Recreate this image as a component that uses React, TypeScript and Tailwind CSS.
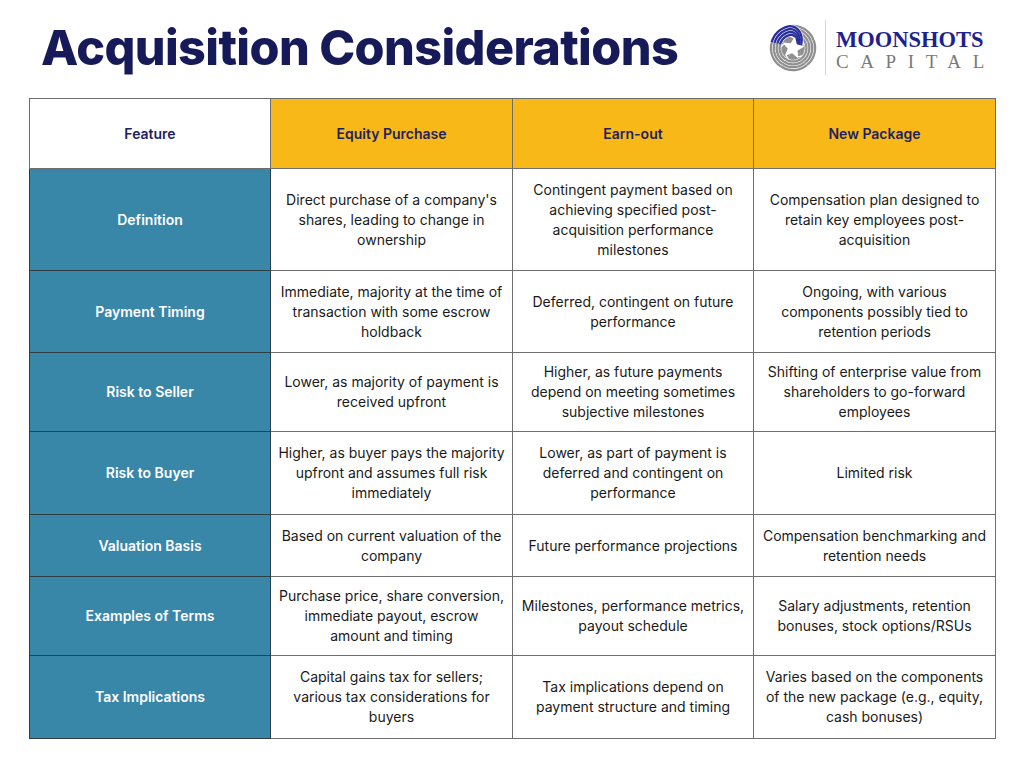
import React from 'react';

type Row = { feature: string; cells: string[]; h: string };

const rows: Row[] = [
  {
    feature: 'Definition',
    h: 'h-[102px]',
    cells: [
      "Direct purchase of a company's shares, leading to change in ownership",
      'Contingent payment based on achieving specified post-acquisition performance milestones',
      'Compensation plan designed to retain key employees post-acquisition',
    ],
  },
  {
    feature: 'Payment Timing',
    h: 'h-[82px]',
    cells: [
      'Immediate, majority at the time of transaction with some escrow holdback',
      'Deferred, contingent on future performance',
      'Ongoing, with various components possibly tied to retention periods',
    ],
  },
  {
    feature: 'Risk to Seller',
    h: 'h-[79px]',
    cells: [
      'Lower, as majority of payment is received upfront',
      'Higher, as future payments depend on meeting sometimes subjective milestones',
      'Shifting of enterprise value from shareholders to go-forward employees',
    ],
  },
  {
    feature: 'Risk to Buyer',
    h: 'h-[83px]',
    cells: [
      'Higher, as buyer pays the majority upfront and assumes full risk immediately',
      'Lower, as part of payment is deferred and contingent on performance',
      'Limited risk',
    ],
  },
  {
    feature: 'Valuation Basis',
    h: 'h-[62px]',
    cells: [
      'Based on current valuation of the company',
      'Future performance projections',
      'Compensation benchmarking and retention needs',
    ],
  },
  {
    feature: 'Examples of Terms',
    h: 'h-[79px]',
    cells: [
      'Purchase price, share conversion, immediate payout, escrow\namount and timing',
      'Milestones, performance metrics, payout schedule',
      'Salary adjustments, retention bonuses, stock options/RSUs',
    ],
  },
  {
    feature: 'Tax Implications',
    h: 'h-[83px]',
    cells: [
      'Capital gains tax for sellers; various tax considerations for buyers',
      'Tax implications depend on payment structure and timing',
      'Varies based on the components of the new package (e.g., equity, cash bonuses)',
    ],
  },
];

const xy = (ang: number, rad: number) => {
  const t = (ang * Math.PI) / 180;
  return `${(25 + rad * Math.cos(t)).toFixed(2)},${(25 + rad * Math.sin(t)).toFixed(2)}`;
};

const ease = (x: number) => {
  const c = Math.min(1, Math.max(0, x));
  return c * c * (3 - 2 * c);
};

// one woven band: four stripes running along the rim, then diving in towards the star
const bandPaths = (a: number) =>
  [0, 1, 2, 3].map((i) => {
    const r0 = 23 - i * 3;
    const pts: string[] = [];
    for (let s = 0; s <= 40; s++) {
      const f = s / 40;
      pts.push(xy(a + f * 150, r0 - 14 * ease((f - 0.42) / 0.58)));
    }
    return pts.join(' ');
  });

const LogoMark = () => (
  <svg width="48" height="48" viewBox="0 0 50 50">
    {[1, 2, 3, 4, 0].map((k) => {
      const a = -165 + k * 72;
      const color = k === 0 ? '#2a2f9c' : '#8f8f8f';
      const paths = bandPaths(a);
      return (
        <g key={k} fill="none" strokeLinecap="butt">
          {paths.map((p, i) => (
            <polyline key={'w' + i} points={p} stroke="white" strokeWidth="3.6" />
          ))}
          {paths.map((p, i) => (
            <polyline key={'c' + i} points={p} stroke={color} strokeWidth="2.4" />
          ))}
        </g>
      );
    })}
    <polygon
      fill="white"
      points={[0, 1, 2, 3, 4, 5, 6, 7, 8, 9]
        .map((i) => xy(-80 + i * 36, i % 2 === 0 ? 12 : 5.5))
        .join(' ')}
    />
  </svg>
);

export default function App() {
  return (
    <div className="w-[1024px] h-[768px] bg-white font-['Inter',sans-serif] overflow-hidden">
      <div className="flex items-start justify-between h-[98px]">
        <h1 className="ml-[41px] mt-[20px] text-[48.5px] leading-[56px] font-extrabold tracking-[-0.6px] text-[#161a58]">
          Acquisition Considerations
        </h1>
        <div className="flex items-center mr-[40px] mt-[20px]">
          <LogoMark />
          <div className="w-px h-[55px] bg-[#d4d4d4] ml-[8px] mr-[10px]" />
          <div className="flex flex-col w-[148px] pt-[6px] font-['Liberation_Serif',serif]">
            <span className="text-[22.5px] leading-[22px] font-bold text-[#1f1f8f] whitespace-nowrap">MOONSHOTS</span>
            <span className="text-[19px] leading-[22px] text-[#7a7a7a] tracking-[11.6px] whitespace-nowrap">CAPITAL</span>
          </div>
        </div>
      </div>
      <table className="ml-[29px] w-[966px] table-fixed border-collapse text-[14px] leading-[20px]">
        <colgroup>
          <col className="w-[241px]" />
          <col className="w-[242px]" />
          <col className="w-[241px]" />
          <col className="w-[242px]" />
        </colgroup>
        <thead>
          <tr className="h-[70px]">
            <th className="border border-[#6e6e6e] bg-white font-semibold text-[#1f2160]">Feature</th>
            <th className="border border-[#6e6e6e] bg-[#f8b817] font-semibold text-[#1f2160]">Equity Purchase</th>
            <th className="border border-[#6e6e6e] bg-[#f8b817] font-semibold text-[#1f2160]">Earn-out</th>
            <th className="border border-[#6e6e6e] bg-[#f8b817] font-semibold text-[#1f2160]">New Package</th>
          </tr>
        </thead>
        <tbody>
          {rows.map((row) => (
            <tr key={row.feature} className={row.h}>
              <td className="border border-[#2f3d45] bg-[#3886a8] text-center font-semibold text-white">
                {row.feature}
              </td>
              {row.cells.map((c, i) => (
                <td key={i} className="border border-[#6e6e6e] px-[6px] text-center text-[#1a1a1a] whitespace-pre-line">
                  {c}
                </td>
              ))}
            </tr>
          ))}
        </tbody>
      </table>
    </div>
  );
}
